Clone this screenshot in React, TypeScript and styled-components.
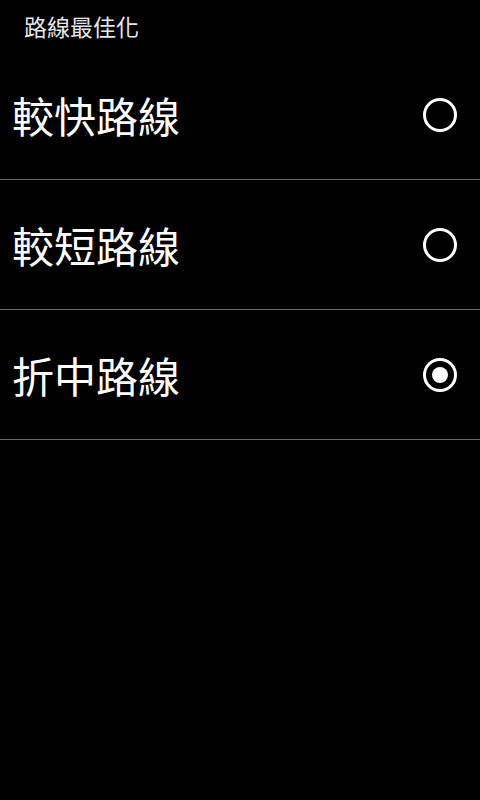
import React, {useState} from 'react'
import styled, {createGlobalStyle} from "styled-components";

const GlobalStyle = createGlobalStyle`
  html, body {
    margin: 0;
    padding: 0;
    background: #000;
    width: 480px;
    height: 800px;
    overflow: hidden;
  }
  body {
    font-family: "Noto Sans CJK TC", "Noto Sans", sans-serif;
  }
`

const Screen = styled.div`
  width: 480px;
  height: 800px;
  background: #000;
  color: #fff;
  display: flex;
  flex-direction: column;
`

const Title = styled.div`
  height: 50px;
  padding-left: 24px;
  display: flex;
  align-items: center;
  font-size: 23px;
  color: #e6e6e6;
  padding-top: 2px;
  box-sizing: border-box;
`

const List = styled.div`
  display: flex;
  flex-direction: column;
`

const Row = styled.div`
  height: 130px;
  box-sizing: border-box;
  border-bottom: 1px solid #666;
  display: flex;
  align-items: center;
  justify-content: space-between;
  padding: 0 23px 0 12px;
  cursor: pointer;
`

const Label = styled.span`
  font-size: 42px;
  line-height: 1;
  color: #fff;
`

const Radio = styled.span<{ $checked: boolean }>`
  width: 34px;
  height: 34px;
  box-sizing: border-box;
  border: 3px solid #fff;
  border-radius: 50%;
  display: flex;
  align-items: center;
  justify-content: center;

  &::after {
    content: '';
    width: 16px;
    height: 16px;
    border-radius: 50%;
    background: #fff;
    display: ${p => (p.$checked ? 'block' : 'none')};
  }
`

const OPTIONS = ['較快路線', '較短路線', '折中路線']

export default function App() {
    const [selected, setSelected] = useState(2)

    return <Screen>
        <GlobalStyle/>
        <Title>路線最佳化</Title>
        <List>
            {OPTIONS.map((name, i) => (
                <Row key={name} onClick={() => setSelected(i)}>
                    <Label>{name}</Label>
                    <Radio $checked={selected === i}/>
                </Row>
            ))}
        </List>
    </Screen>
}
